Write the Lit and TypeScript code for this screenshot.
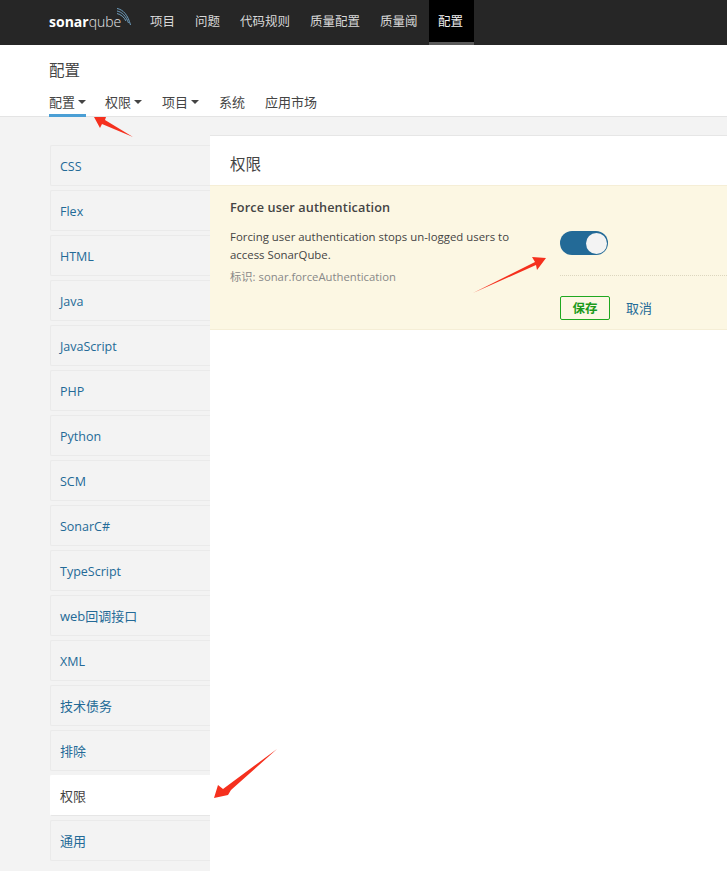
import { LitElement, html, css, svg } from "lit";
import { customElement } from "lit/decorators.js";

const FONT = css`"Open Sans", "Noto Sans CJK SC", sans-serif`;

@customElement("app-root")
export class AppRoot extends LitElement {
  static styles = css`
    :host {
      display: block;
      position: relative;
      width: 727px;
      height: 871px;
      overflow: hidden;
      background: #f3f3f3;
      font-family: ${FONT};
      font-size: 12.5px;
      color: #444;
    }
    .navbar {
      height: 45px;
      background: #262626;
      display: flex;
      padding-left: 49px;
      box-sizing: border-box;
    }
    .logo {
      width: 91px;
      height: 45px;
      position: relative;
      display: flex;
      align-items: center;
      color: #fff;
      font-size: 14px;
      line-height: 1;
      padding-bottom: 2px;
      box-sizing: border-box;
    }
    .logo b { font-weight: 700; }
    .logo span { font-weight: 300; color: #e6e6e6; }
    .logo svg { position: absolute; left: 64px; top: 7px; }
    .nav-item {
      padding: 0 10px;
      height: 45px;
      line-height: 43px;
      color: #d8d8d8;
      box-sizing: border-box;
      white-space: nowrap;
    }
    .nav-item.active {
      background: #000;
      color: #f0f0f0;
      padding: 0 0 0 9.5px;
      width: 45px;
      border-bottom: 3px solid #5a5a5a;
      margin-left: 1px;
    }
    .header {
      height: 72px;
      background: #fff;
      border-bottom: 1px solid #e4e4e4;
      box-sizing: border-box;
      padding: 14px 0 0 49px;
    }
    .title {
      font-size: 15.5px;
      line-height: 22px;
      color: #444;
    }
    .tabs {
      display: flex;
      gap: 20px;
      margin-top: 11px;
      height: 25px;
      font-size: 13px;
    }
    .tab {
      height: 25px;
      line-height: 20px;
      box-sizing: border-box;
      display: flex;
      align-items: flex-start;
      gap: 3px;
      color: #444;
    }
    .tab.active { border-bottom: 3px solid #4b9fd5; margin-right: -1px; }
    .caret {
      width: 0;
      height: 0;
      border-left: 4px solid transparent;
      border-right: 4px solid transparent;
      border-top: 4px solid #444;
      margin-top: 8px;
    }
    .body {
      display: flex;
      align-items: flex-start;
      padding-left: 50px;
    }
    .side {
      width: 160px;
      padding-top: 28px;
      display: flex;
      flex-direction: column;
      gap: 4px;
    }
    .side-item {
      height: 41px;
      box-sizing: border-box;
      padding-left: 9px;
      line-height: 41px;
      color: #236a97;
      background: #f3f3f3;
      border: 1px solid #eaeaea;
      border-right: none;
      border-radius: 2px 0 0 2px;
      white-space: nowrap;
    }
    .side-item.cjk { font-size: 13px; line-height: 40px; }
    .side-item.active {
      background: #fff;
      color: #444;
      border-color: #fff;
      border-bottom-color: #e6e6e6;
    }
    .main {
      width: 517px;
      height: 737px;
      margin-top: 18px;
      background: #fff;
      border-top: 1px solid #e6e6e6;
      box-sizing: border-box;
    }
    .main-title {
      height: 49px;
      padding: 16px 0 0 20px;
      box-sizing: border-box;
      font-size: 15.5px;
      line-height: 24px;
      color: #444;
    }
    .setting {
      height: 145px;
      box-sizing: border-box;
      background: #fcf7e3;
      border-top: 1px solid #f5eed6;
      border-bottom: 1px solid #f5eed6;
      padding: 12px 0 0 20px;
      display: flex;
    }
    .info { width: 330px; }
    .setting-name {
      font-weight: 600;
      font-size: 12.7px;
      line-height: 18px;
      color: #444;
      letter-spacing: 0.1px;
    }
    .desc {
      margin-top: 12px;
      font-size: 11.4px;
      line-height: 18px;
      color: #444;
      width: 300px;
    }
    .key {
      margin-top: 4px;
      font-size: 11.3px;
      line-height: 18px;
      color: #888;
    }
    .control { flex: 1; padding-top: 33px; }
    .toggle {
      width: 48px;
      height: 24px;
      border-radius: 12px;
      background: #236a97;
      position: relative;
    }
    .knob {
      position: absolute;
      right: 1px;
      top: 1.5px;
      width: 21px;
      height: 21px;
      border-radius: 50%;
      background: #f3f3f3;
    }
    .dots {
      margin-top: 20px;
      border-top: 1px dotted #dcd6bf;
    }
    .actions {
      display: flex;
      align-items: center;
      gap: 16px;
      margin-top: 20px;
    }
    .save {
      width: 50px;
      height: 24px;
      box-sizing: border-box;
      border: 1px solid #1fa81f;
      border-radius: 2px;
      color: #1b9a1b;
      font-weight: 700;
      font-size: 12.5px;
      line-height: 23px;
      text-align: center;
    }
    .cancel { color: #236a97; font-size: 13px; margin-bottom: 2px; }
    .arrows { position: absolute; left: 0; top: 0; pointer-events: none; }
  `;

  render() {
    const side = ["CSS","Flex","HTML","Java","JavaScript","PHP","Python","SCM","SonarC#","TypeScript","web回调接口","XML","技术债务","排除","权限","通用"];
    return html`
      <div class="navbar">
        <div class="logo"><b>sonar</b><span>qube</span>
          <svg width="20" height="20" viewBox="0 0 20 20" fill="none" stroke="#6f9fc0">
            <path d="M4 1.5C10 2.5 15 8 17.5 18" stroke-width="1"/>
            <path d="M4 4C9 5 13 9 15.5 16" stroke-width="1"/>
            <path d="M4 6.5C8 7.5 11 10 13 14" stroke-width="1"/>
          </svg>
        </div>
        ${["项目","问题","代码规则","质量配置","质量阈"].map(t => html`<div class="nav-item">${t}</div>`)}
        <div class="nav-item active">配置</div>
      </div>
      <div class="header">
        <div class="title">配置</div>
        <div class="tabs">
          <div class="tab active">配置<i class="caret"></i></div>
          <div class="tab">权限<i class="caret"></i></div>
          <div class="tab">项目<i class="caret"></i></div>
          <div class="tab">系统</div>
          <div class="tab">应用市场</div>
        </div>
      </div>
      <div class="body">
        <div class="side">
          ${side.map(t => html`<div class="side-item ${/[\u4e00-\u9fff]/.test(t) ? "cjk" : ""} ${t === "权限" ? "active" : ""}">${t}</div>`)}
        </div>
        <div class="main">
          <div class="main-title">权限</div>
          <div class="setting">
            <div class="info">
              <div class="setting-name">Force user authentication</div>
              <div class="desc">Forcing user authentication stops un-logged users to access SonarQube.</div>
              <div class="key">标识: sonar.forceAuthentication</div>
            </div>
            <div class="control">
              <div class="toggle"><div class="knob"></div></div>
              <div class="dots"></div>
              <div class="actions"><div class="save">保存</div><div class="cancel">取消</div></div>
            </div>
          </div>
        </div>
      </div>
      <svg class="arrows" width="727" height="871" viewBox="0 0 727 871">
        ${svg`<polygon fill="#f5301e" points="133,137 105,120 106,117 94,117 100,128 102,124" />
        <polygon fill="#f5301e" points="473,293 535,262 532,257 546,258 537,270 536,265" />
        <polygon fill="#f5301e" points="277,749 231,790 228,795 214,798 218,785 223,789" />`}
      </svg>
    `;
  }
}
